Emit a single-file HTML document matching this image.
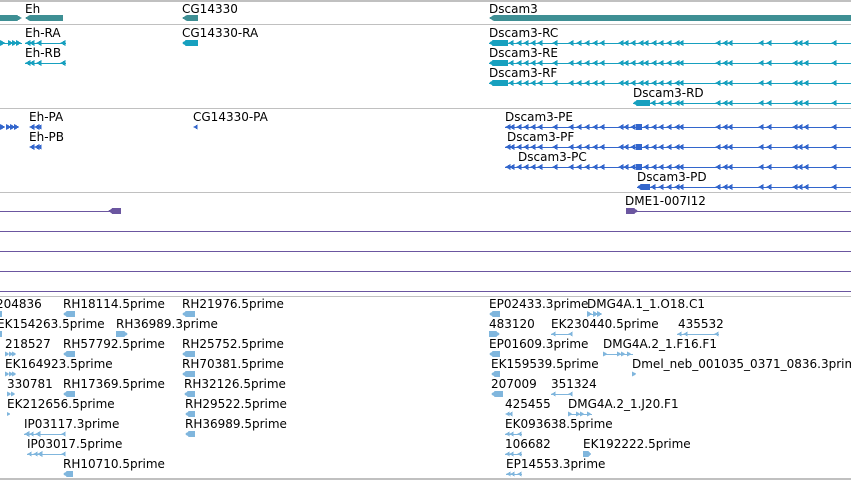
<!DOCTYPE html>
<html><head><meta charset="utf-8"><style>
html,body{margin:0;padding:0;background:#fff;width:851px;height:480px;overflow:hidden}
svg{display:block}
text{font-family:"DejaVu Sans","Liberation Sans",sans-serif;font-size:12px;fill:#000}
</style></head><body>
<svg width="851" height="480" viewBox="0 0 851 480" xmlns="http://www.w3.org/2000/svg" shape-rendering="crispEdges">
<defs>
<symbol id="la" viewBox="0 0 7 7" overflow="visible"><polygon points="0,3.5 6.5,0 6.5,7"/></symbol>
<symbol id="ra" viewBox="0 0 7 7" overflow="visible"><polygon points="6.5,3.5 0,0 0,7"/></symbol>
</defs>
<g fill="#c0c0c0">
<rect x="0" y="0" width="851" height="2"/>
<rect x="0" y="24" width="851" height="1"/>
<rect x="0" y="108" width="851" height="1"/>
<rect x="0" y="192" width="851" height="1"/>
<rect x="0" y="296" width="851" height="1"/>
<rect x="0" y="478" width="851" height="2"/>
</g>
<g fill="#6b56a0">
<rect x="0" y="231" width="851" height="1"/>
<rect x="0" y="251" width="851" height="1"/>
<rect x="0" y="271" width="851" height="1"/>
<rect x="0" y="291" width="851" height="1"/>
<rect x="0" y="211" width="112" height="1"/>
<rect x="112" y="208" width="9" height="6"/>
<polygon points="108,211 113,208 113,214"/>
<rect x="626" y="208" width="8" height="6"/>
<polygon points="634,208 638,211 634,214"/>
<rect x="634" y="211" width="217" height="1"/>
</g>
<g fill="#3e8f94">
<polygon points="0,15 17,15 22,18 17,21 0,21"/>
<polygon points="25,18 30,15 63,15 63,21 30,21"/>
<polygon points="182,18 187,15 198,15 198,21 187,21"/>
<polygon points="489,18 494,15 851,15 851,21 494,21"/>
</g>
<text x="25" y="13">Eh</text>
<text x="182" y="13">CG14330</text>
<text x="489" y="13">Dscam3</text>
<text x="25" y="37">Eh-RA</text>
<text x="25" y="57">Eh-RB</text>
<text x="182" y="37">CG14330-RA</text>
<text x="489" y="37">Dscam3-RC</text>
<text x="489" y="57">Dscam3-RE</text>
<text x="489" y="77">Dscam3-RF</text>
<text x="633" y="97">Dscam3-RD</text>
<g fill="#17a0bf">
<rect x="0" y="43" width="22" height="1"/>
<use href="#ra" x="0" y="40" width="6" height="6"/><use href="#ra" x="8" y="40" width="6" height="6"/><use href="#ra" x="12" y="40" width="6" height="6"/><use href="#ra" x="16" y="40" width="6" height="6"/>
<rect x="25" y="43" width="41" height="1"/>
<use href="#la" x="25" y="40" width="6" height="6"/><use href="#la" x="29" y="40" width="6" height="6"/><use href="#la" x="36" y="40" width="6" height="6"/><use href="#la" x="60" y="40" width="6" height="6"/>
<rect x="25" y="63" width="41" height="1"/>
<use href="#la" x="25" y="60" width="6" height="6"/><use href="#la" x="29" y="60" width="6" height="6"/><use href="#la" x="36" y="60" width="6" height="6"/><use href="#la" x="60" y="60" width="6" height="6"/>
<polygon points="182,43 186,40 198,40 198,46 186,46"/>
<g id="dtx">
<rect x="489" y="43" width="362" height="1"/>
<polygon points="489,43 493,40 508,40 508,46 493,46"/>
<use href="#la" x="508" y="40" width="6" height="6"/><use href="#la" x="516" y="40" width="6" height="6"/><use href="#la" x="523" y="40" width="6" height="6"/><use href="#la" x="530" y="40" width="6" height="6"/><use href="#la" x="537" y="40" width="6" height="6"/><use href="#la" x="552" y="40" width="6" height="6"/><use href="#la" x="568" y="40" width="6" height="6"/><use href="#la" x="576" y="40" width="6" height="6"/><use href="#la" x="584" y="40" width="6" height="6"/><use href="#la" x="592" y="40" width="6" height="6"/><use href="#la" x="599" y="40" width="6" height="6"/><use href="#la" x="618" y="40" width="6" height="6"/><use href="#la" x="623" y="40" width="6" height="6"/><use href="#la" x="630" y="40" width="6" height="6"/><use href="#la" x="638" y="40" width="6" height="6"/><use href="#la" x="643" y="40" width="6" height="6"/><use href="#la" x="651" y="40" width="6" height="6"/><use href="#la" x="658" y="40" width="6" height="6"/><use href="#la" x="666" y="40" width="6" height="6"/><use href="#la" x="674" y="40" width="6" height="6"/><use href="#la" x="678" y="40" width="6" height="6"/><use href="#la" x="715" y="40" width="6" height="6"/><use href="#la" x="722" y="40" width="6" height="6"/><use href="#la" x="727" y="40" width="6" height="6"/><use href="#la" x="758" y="40" width="6" height="6"/><use href="#la" x="766" y="40" width="6" height="6"/><use href="#la" x="792" y="40" width="6" height="6"/><use href="#la" x="797" y="40" width="6" height="6"/><use href="#la" x="803" y="40" width="6" height="6"/><use href="#la" x="831" y="40" width="6" height="6"/>
</g>
<use href="#dtx" y="20"/>
<use href="#dtx" y="40"/>
<rect x="633" y="103" width="218" height="1"/>
<polygon points="633,103 637,100 650,100 650,106 637,106"/>
<use href="#la" x="650" y="100" width="6" height="6"/><use href="#la" x="658" y="100" width="6" height="6"/><use href="#la" x="666" y="100" width="6" height="6"/><use href="#la" x="674" y="100" width="6" height="6"/><use href="#la" x="678" y="100" width="6" height="6"/><use href="#la" x="715" y="100" width="6" height="6"/><use href="#la" x="722" y="100" width="6" height="6"/><use href="#la" x="727" y="100" width="6" height="6"/><use href="#la" x="758" y="100" width="6" height="6"/><use href="#la" x="766" y="100" width="6" height="6"/><use href="#la" x="792" y="100" width="6" height="6"/><use href="#la" x="797" y="100" width="6" height="6"/><use href="#la" x="803" y="100" width="6" height="6"/><use href="#la" x="831" y="100" width="6" height="6"/>
</g>
<text x="29" y="121">Eh-PA</text>
<text x="29" y="141">Eh-PB</text>
<text x="193" y="121">CG14330-PA</text>
<text x="505" y="121">Dscam3-PE</text>
<text x="507" y="141">Dscam3-PF</text>
<text x="518" y="161">Dscam3-PC</text>
<text x="637" y="181">Dscam3-PD</text>
<g fill="#3366cc">
<use href="#ra" x="0" y="124" width="6" height="6"/><use href="#ra" x="6" y="124" width="6" height="6"/><use href="#ra" x="10" y="124" width="6" height="6"/><use href="#ra" x="14" y="124" width="6" height="6"/>
<use href="#la" x="29" y="124" width="6" height="6"/><use href="#la" x="34" y="124" width="6" height="6"/><use href="#la" x="37" y="124" width="5" height="6"/>
<use href="#la" x="29" y="144" width="6" height="6"/><use href="#la" x="34" y="144" width="6" height="6"/><use href="#la" x="37" y="144" width="5" height="6"/>
<use href="#la" x="193" y="124" width="5" height="6"/>
<g id="dpr">
<rect x="505" y="127" width="346" height="1"/>
<use href="#la" x="505" y="124" width="6" height="6"/><use href="#la" x="509" y="124" width="6" height="6"/><use href="#la" x="516" y="124" width="6" height="6"/><use href="#la" x="523" y="124" width="6" height="6"/><use href="#la" x="530" y="124" width="6" height="6"/><use href="#la" x="537" y="124" width="6" height="6"/><use href="#la" x="552" y="124" width="6" height="6"/><use href="#la" x="568" y="124" width="6" height="6"/><use href="#la" x="576" y="124" width="6" height="6"/><use href="#la" x="584" y="124" width="6" height="6"/><use href="#la" x="592" y="124" width="6" height="6"/><use href="#la" x="599" y="124" width="6" height="6"/><use href="#la" x="618" y="124" width="6" height="6"/><use href="#la" x="623" y="124" width="6" height="6"/><use href="#la" x="630" y="124" width="6" height="6"/><rect x="636" y="124" width="6" height="6"/><use href="#la" x="643" y="124" width="6" height="6"/><use href="#la" x="651" y="124" width="6" height="6"/><use href="#la" x="658" y="124" width="6" height="6"/><use href="#la" x="666" y="124" width="6" height="6"/><use href="#la" x="674" y="124" width="6" height="6"/><use href="#la" x="678" y="124" width="6" height="6"/><use href="#la" x="715" y="124" width="6" height="6"/><use href="#la" x="722" y="124" width="6" height="6"/><use href="#la" x="727" y="124" width="6" height="6"/><use href="#la" x="758" y="124" width="6" height="6"/><use href="#la" x="766" y="124" width="6" height="6"/><use href="#la" x="792" y="124" width="6" height="6"/><use href="#la" x="797" y="124" width="6" height="6"/><use href="#la" x="803" y="124" width="6" height="6"/><use href="#la" x="831" y="124" width="6" height="6"/>
</g>
<use href="#dpr" y="20"/>
<use href="#dpr" y="40"/>
<rect x="637" y="187" width="214" height="1"/>
<polygon points="637,187 641,184 650,184 650,190 641,190"/>
<use href="#la" x="650" y="184" width="6" height="6"/><use href="#la" x="658" y="184" width="6" height="6"/><use href="#la" x="666" y="184" width="6" height="6"/><use href="#la" x="674" y="184" width="6" height="6"/><use href="#la" x="678" y="184" width="6" height="6"/><use href="#la" x="715" y="184" width="6" height="6"/><use href="#la" x="722" y="184" width="6" height="6"/><use href="#la" x="727" y="184" width="6" height="6"/><use href="#la" x="758" y="184" width="6" height="6"/><use href="#la" x="766" y="184" width="6" height="6"/><use href="#la" x="792" y="184" width="6" height="6"/><use href="#la" x="797" y="184" width="6" height="6"/><use href="#la" x="803" y="184" width="6" height="6"/><use href="#la" x="831" y="184" width="6" height="6"/>
</g>
<text x="625" y="205">DME1-007I12</text>
<g>
<text x="-4" y="308">204836</text><text x="63" y="308">RH18114.5prime</text><text x="182" y="308">RH21976.5prime</text><text x="489" y="308">EP02433.3prime</text><text x="587" y="308">DMG4A.1_1.O18.C1</text>
<text x="-3" y="328">EK154263.5prime</text><text x="116" y="328">RH36989.3prime</text><text x="489" y="328">483120</text><text x="551" y="328">EK230440.5prime</text><text x="678" y="328">435532</text>
<text x="5" y="348">218527</text><text x="63" y="348">RH57792.5prime</text><text x="182" y="348">RH25752.5prime</text><text x="489" y="348">EP01609.3prime</text><text x="603" y="348">DMG4A.2_1.F16.F1</text>
<text x="5" y="368">EK164923.5prime</text><text x="182" y="368">RH70381.5prime</text><text x="491" y="368">EK159539.5prime</text><text x="632" y="368">Dmel_neb_001035_0371_0836.3prime</text>
<text x="7" y="388">330781</text><text x="63" y="388">RH17369.5prime</text><text x="184" y="388">RH32126.5prime</text><text x="491" y="388">207009</text><text x="551" y="388">351324</text>
<text x="7" y="408">EK212656.5prime</text><text x="185" y="408">RH29522.5prime</text><text x="505" y="408">425455</text><text x="568" y="408">DMG4A.2_1.J20.F1</text>
<text x="24" y="428">IP03117.3prime</text><text x="185" y="428">RH36989.5prime</text><text x="505" y="428">EK093638.5prime</text>
<text x="27" y="448">IP03017.5prime</text><text x="505" y="448">106682</text><text x="583" y="448">EK192222.5prime</text>
<text x="63" y="468">RH10710.5prime</text><text x="506" y="468">EP14553.3prime</text>
</g>
<g fill="#80b6dd">
<rect x="0" y="311" width="2" height="6"/>
<polygon points="63,314 67,311 75,311 75,317 67,317"/>
<polygon points="182,314 186,311 195,311 195,317 186,317"/>
<polygon points="489,314 493,311 500,311 500,317 493,317"/>
<use href="#ra" x="587" y="311" width="6" height="6"/><use href="#ra" x="593" y="311" width="6" height="6"/><use href="#ra" x="597" y="311" width="6" height="6"/><rect x="590" y="314" width="6" height="1"/>
<rect x="0" y="331" width="2" height="6"/>
<polygon points="116,331 124,331 128,334 124,337 116,337"/>
<polygon points="489,331 496,331 500,334 496,337 489,337"/>
<rect x="551" y="334" width="21" height="1"/><use href="#la" x="551" y="331" width="5" height="6"/><use href="#la" x="568" y="331" width="5" height="6"/>
<rect x="677" y="334" width="42" height="1"/><use href="#la" x="677" y="331" width="5" height="6"/><use href="#la" x="683" y="331" width="5" height="6"/><use href="#la" x="714" y="331" width="5" height="6"/>
<use href="#ra" x="5" y="351" width="5" height="6"/><use href="#ra" x="9" y="351" width="5" height="6"/><use href="#ra" x="12" y="351" width="5" height="6"/>
<polygon points="63,354 67,351 75,351 75,357 67,357"/>
<polygon points="182,354 186,351 195,351 195,357 186,357"/>
<polygon points="489,354 493,351 500,351 500,357 493,357"/>
<rect x="603" y="354" width="30" height="1"/><use href="#ra" x="603" y="351" width="5" height="6"/><use href="#ra" x="617" y="351" width="5" height="6"/><use href="#ra" x="621" y="351" width="5" height="6"/><use href="#ra" x="627" y="351" width="5" height="6"/>
<use href="#ra" x="5" y="371" width="5" height="6"/><use href="#ra" x="9" y="371" width="5" height="6"/><use href="#ra" x="12" y="371" width="5" height="6"/>
<polygon points="182,374 186,371 195,371 195,377 186,377"/>
<polygon points="491,374 495,371 500,371 500,377 495,377"/>
<use href="#ra" x="632" y="371" width="5" height="6"/>
<use href="#ra" x="7" y="391" width="5" height="6"/><use href="#ra" x="11" y="391" width="5" height="6"/>
<polygon points="63,394 67,391 75,391 75,397 67,397"/>
<polygon points="184,394 188,391 195,391 195,397 188,397"/>
<polygon points="491,394 495,391 503,391 503,397 495,397"/>
<rect x="551" y="394" width="21" height="1"/><use href="#la" x="551" y="391" width="5" height="6"/><use href="#la" x="568" y="391" width="5" height="6"/>
<use href="#ra" x="7" y="411" width="4" height="6"/>
<polygon points="185,414 189,411 195,411 195,417 189,417"/>
<use href="#la" x="505" y="411" width="5" height="6"/><use href="#la" x="508" y="411" width="5" height="6"/>
<rect x="568" y="414" width="24" height="1"/><use href="#ra" x="568" y="411" width="5" height="6"/><use href="#ra" x="576" y="411" width="5" height="6"/><use href="#ra" x="580" y="411" width="5" height="6"/><use href="#ra" x="587" y="411" width="5" height="6"/>
<rect x="24" y="434" width="41" height="1"/><use href="#la" x="24" y="431" width="6" height="6"/><use href="#la" x="29" y="431" width="5" height="6"/><use href="#la" x="35" y="431" width="6" height="6"/><use href="#la" x="61" y="431" width="5" height="6"/>
<polygon points="185,434 189,431 195,431 195,437 189,437"/>
<rect x="505" y="434" width="17" height="1"/><use href="#la" x="505" y="431" width="5" height="6"/><use href="#la" x="509" y="431" width="5" height="6"/><use href="#la" x="517" y="431" width="5" height="6"/>
<rect x="27" y="454" width="38" height="1"/><use href="#la" x="27" y="451" width="5" height="6"/><use href="#la" x="33" y="451" width="5" height="6"/><use href="#la" x="37" y="451" width="6" height="6"/><use href="#la" x="61" y="451" width="5" height="6"/>
<rect x="505" y="454" width="17" height="1"/><use href="#la" x="505" y="451" width="5" height="6"/><use href="#la" x="509" y="451" width="5" height="6"/><use href="#la" x="517" y="451" width="5" height="6"/>
<polygon points="583,451 588,451 591,454 588,457 583,457"/>
<polygon points="63,474 67,471 73,471 73,477 67,477"/>
<rect x="506" y="474" width="16" height="1"/><use href="#la" x="506" y="471" width="5" height="6"/><use href="#la" x="510" y="471" width="5" height="6"/><use href="#la" x="517" y="471" width="5" height="6"/>
</g>
</svg>
</body></html>
